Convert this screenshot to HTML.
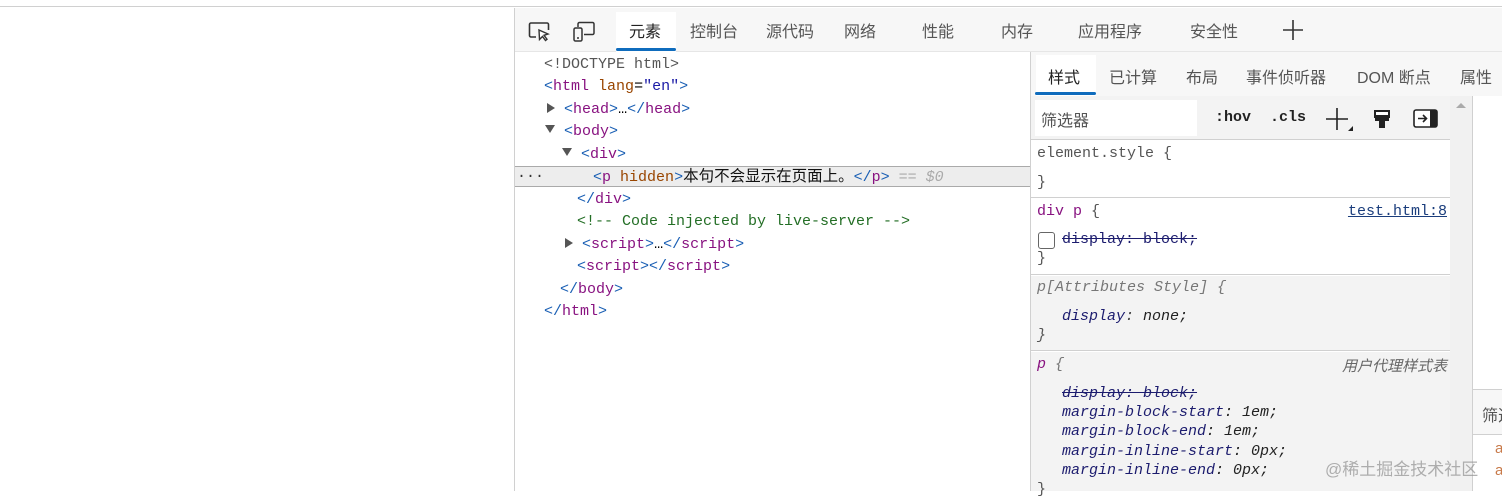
<!DOCTYPE html>
<html><head><meta charset="utf-8"><style>
*{margin:0;padding:0;box-sizing:border-box}
body{width:1502px;height:491px;overflow:hidden;background:#fff;position:relative;font-family:"Liberation Sans","Noto Sans CJK SC",sans-serif}
.abs{position:absolute;white-space:nowrap}
.mono{font-family:"Liberation Mono","Noto Sans CJK SC",monospace;font-size:15px;white-space:pre}
.tag{color:#881280}.br{color:#1a5fb4}.at{color:#994500}.av{color:#1a1aa6}
.tab{position:absolute;top:18px;font-size:16px;color:#555;white-space:nowrap}
.line{position:absolute;height:22px;line-height:22px}
.tri{display:inline-block;width:0;height:0}
.tr{border-top:5px solid transparent;border-bottom:5px solid transparent;border-left:8px solid #555}
.td{border-left:5px solid transparent;border-right:5px solid transparent;border-top:8px solid #555}
.prop{color:#1c1c6e}
</style></head><body>
<div class="abs" style="left:0;top:0;width:1502px;height:7px;background:#fff;border-bottom:1px solid #d0d0d0"></div>
<div class="abs" style="left:514px;top:8px;width:1px;height:483px;background:#d0d0d0"></div>
<!-- toolbar -->
<div class="abs" style="left:515px;top:8px;width:987px;height:44px;background:#f7f7f7;border-bottom:1px solid #e6e6e6"></div>
<svg class="abs" style="left:528px;top:21px" width="24" height="22" viewBox="0 0 24 22"><path d="M8 16H3a1.5 1.5 0 0 1-1.5-1.5v-11A1.5 1.5 0 0 1 3 2h16a1.5 1.5 0 0 1 1.5 1.5V9" fill="none" stroke="#333" stroke-width="1.6"/><path d="M11 9l9 4-4 1.3 3 4-1.5 1.2-3-4-3 3z" fill="#fff" stroke="#333" stroke-width="1.4"/></svg>
<svg class="abs" style="left:572px;top:21px" width="24" height="22" viewBox="0 0 24 22"><rect x="2" y="7" width="8" height="13" rx="1.5" fill="none" stroke="#333" stroke-width="1.5"/><path d="M6 6V3a1.5 1.5 0 0 1 1.5-1.5h13A1.5 1.5 0 0 1 22 3v9a1.5 1.5 0 0 1-1.5 1.5H12" fill="none" stroke="#333" stroke-width="1.5"/><line x1="5" y1="17" x2="7" y2="17" stroke="#333" stroke-width="1.5"/></svg>
<div class="abs" style="left:616px;top:12px;width:60px;height:40px;background:#fff"></div>
<div class="abs" style="left:616px;top:48px;width:60px;height:3px;background:#0f6cbd;border-radius:2px"></div>
<div class="tab" style="left:629px;color:#222">元素</div>
<div class="tab" style="left:690px">控制台</div>
<div class="tab" style="left:766px">源代码</div>
<div class="tab" style="left:844px">网络</div>
<div class="tab" style="left:922px">性能</div>
<div class="tab" style="left:1001px">内存</div>
<div class="tab" style="left:1078px">应用程序</div>
<div class="tab" style="left:1190px">安全性</div>
<svg class="abs" style="left:1282px;top:19px" width="22" height="22"><path d="M11 1v20M1 11h20" stroke="#333" stroke-width="1.6"/></svg>
<!-- DOM tree -->
<div class="abs" style="left:515px;top:166px;width:515px;height:21px;background:#ededed;border-top:1px solid #aaa;border-bottom:1px solid #aaa"></div>
<div class="mono abs" style="left:515px;top:53px;line-height:22.4px">
<div class="line" style="top:1px;left:29px;color:#555">&lt;!DOCTYPE html&gt;</div>
<div class="line" style="top:23px;left:29px"><span class="br">&lt;</span><span class="tag">html</span> <span class="at">lang</span>=<span class="av">"en"</span><span class="br">&gt;</span></div>
<div class="line" style="top:46px;left:32px"><span class="tri tr"></span> <span class="br">&lt;</span><span class="tag">head</span><span class="br">&gt;</span>…<span class="br">&lt;/</span><span class="tag">head</span><span class="br">&gt;</span></div>
<div class="line" style="top:68px;left:30px"><span class="tri td" style="vertical-align:2px"></span> <span class="br">&lt;</span><span class="tag">body</span><span class="br">&gt;</span></div>
<div class="line" style="top:91px;left:47px"><span class="tri td" style="vertical-align:2px"></span> <span class="br">&lt;</span><span class="tag">div</span><span class="br">&gt;</span></div>
<div class="line" style="top:113px;left:2px;color:#333">···</div>
<div class="line" style="top:113px;left:78px"><span class="br">&lt;</span><span class="tag">p</span> <span class="at">hidden</span><span class="br">&gt;</span><span style="color:#111;font-size:15.5px">本句不会显示在页面上。</span><span class="br">&lt;/</span><span class="tag">p</span><span class="br">&gt;</span> <span style="color:#aaa;font-style:italic">== $0</span></div>
<div class="line" style="top:136px;left:62px"><span class="br">&lt;/</span><span class="tag">div</span><span class="br">&gt;</span></div>
<div class="line" style="top:158px;left:62px;color:#236e25">&lt;!-- Code injected by live-server --&gt;</div>
<div class="line" style="top:181px;left:50px"><span class="tri tr"></span> <span class="br">&lt;</span><span class="tag">script</span><span class="br">&gt;</span>…<span class="br">&lt;/</span><span class="tag">script</span><span class="br">&gt;</span></div>
<div class="line" style="top:203px;left:62px"><span class="br">&lt;</span><span class="tag">script</span><span class="br">&gt;&lt;/</span><span class="tag">script</span><span class="br">&gt;</span></div>
<div class="line" style="top:226px;left:45px"><span class="br">&lt;/</span><span class="tag">body</span><span class="br">&gt;</span></div>
<div class="line" style="top:248px;left:29px"><span class="br">&lt;/</span><span class="tag">html</span><span class="br">&gt;</span></div>
</div>
<!-- styles panel -->
<div class="abs" style="left:1030px;top:52px;width:1px;height:439px;background:#d0d0d0"></div>
<div class="abs" style="left:1031px;top:52px;width:471px;height:44px;background:#f7f7f7"></div>
<div class="abs" style="left:1036px;top:55px;width:60px;height:41px;background:#fff"></div>
<div class="abs" style="left:1035px;top:92px;width:61px;height:3px;background:#0f6cbd;border-radius:2px"></div>
<div class="tab" style="top:64px;left:1048px;color:#222">样式</div>
<div class="tab" style="top:64px;left:1109px">已计算</div>
<div class="tab" style="top:64px;left:1186px">布局</div>
<div class="tab" style="top:64px;left:1246px">事件侦听器</div>
<div class="tab" style="top:64px;left:1357px">DOM 断点</div>
<div class="tab" style="top:64px;left:1460px">属性</div>
<div class="abs" style="left:1031px;top:96px;width:419px;height:44px;background:#f3f3f3;border-bottom:1px solid #d0d0d0"></div>
<div class="abs" style="left:1035px;top:100px;width:162px;height:36px;background:#fff"></div>
<div class="abs" style="left:1041px;top:107px;font-size:16px;color:#555">筛选器</div>
<div class="abs" style="left:1215px;top:109px;font-size:15px;font-weight:bold;color:#222;font-family:'Liberation Mono',monospace">:hov</div>
<div class="abs" style="left:1270px;top:109px;font-size:15px;font-weight:bold;color:#222;font-family:'Liberation Mono',monospace">.cls</div>
<svg class="abs" style="left:1325px;top:107px" width="30" height="28"><path d="M12 1v22M1 12h22" stroke="#222" stroke-width="1.6"/><path d="M28 24v-5l-5 5z" fill="#222"/></svg>
<svg class="abs" style="left:1372px;top:108px" width="20" height="22"><path d="M2 2h16v8H2z" fill="#222"/><path d="M4 4h12v3H4z" fill="#fff"/><path d="M3 10h14v3H3z" fill="#222"/><rect x="7" y="13" width="6" height="7" fill="#222"/></svg>
<svg class="abs" style="left:1413px;top:109px" width="26" height="20"><rect x="1" y="1" width="23" height="17" rx="2" fill="#fff" stroke="#222" stroke-width="1.6"/><rect x="17" y="1" width="7" height="17" fill="#222"/><path d="M5 9.5h8M10 6l3.5 3.5L10 13" stroke="#222" stroke-width="1.6" fill="none"/></svg>
<!-- rules -->
<div class="mono abs" style="left:1031px;top:141px;width:419px;height:350px">
<div class="abs" style="left:0;top:0;width:419px;height:57px;background:#fff;border-bottom:1px solid #d0d0d0"></div>
<div class="abs" style="left:6px;top:4px;color:#555">element.style {</div>
<div class="abs" style="left:6px;top:33px;color:#555">}</div>
<div class="abs" style="left:0;top:58px;width:419px;height:76px;background:#fff;border-bottom:1px solid #d0d0d0"></div>
<div class="abs" style="left:6px;top:62px;color:#555"><span class="tag">div p</span> {</div>
<div class="abs" style="right:3px;top:62px;color:#1a3d7c;text-decoration:underline">test.html:8</div>
<div class="abs" style="left:7px;top:91px;width:17px;height:17px;border:1.5px solid #666;border-radius:3px;background:#fff"></div>
<div class="abs prop" style="left:31px;top:90px;text-decoration:line-through">display: block;</div>
<div class="abs" style="left:6px;top:109px;color:#555">}</div>
<div class="abs" style="left:0;top:135px;width:419px;height:75px;background:#f3f3f3;border-bottom:1px solid #d0d0d0"></div>
<div class="abs" style="left:6px;top:138px;color:#777;font-style:italic">p[Attributes Style] {</div>
<div class="abs prop" style="left:31px;top:167px;font-style:italic">display<span style="color:#444">:</span> <span style="color:#222">none;</span></div>
<div class="abs" style="left:6px;top:186px;color:#555;font-style:italic">}</div>
<div class="abs" style="left:0;top:211px;width:419px;height:139px;background:#f3f3f3"></div>
<div class="abs" style="left:6px;top:215px;font-style:italic;color:#777"><span class="tag">p</span> {</div>
<div class="abs" style="right:3px;top:214px;font-style:italic;color:#666;font-family:'Liberation Sans','Noto Sans CJK SC',sans-serif;font-size:15px">用户代理样式表</div>
<div class="abs prop" style="left:31px;top:244px;font-style:italic;text-decoration:line-through">display: block;</div>
<div class="abs prop" style="left:31px;top:263px;font-style:italic">margin-block-start<span style="color:#222">: 1em;</span></div>
<div class="abs prop" style="left:31px;top:282px;font-style:italic">margin-block-end<span style="color:#222">: 1em;</span></div>
<div class="abs prop" style="left:31px;top:302px;font-style:italic">margin-inline-start<span style="color:#222">: 0px;</span></div>
<div class="abs prop" style="left:31px;top:321px;font-style:italic">margin-inline-end<span style="color:#222">: 0px;</span></div>
<div class="abs" style="left:6px;top:340px;color:#555">}</div>
</div>
<!-- scrollbar -->
<div class="abs" style="left:1450px;top:96px;width:22px;height:395px;background:#f1f1f1"></div>
<div class="abs" style="left:1456px;top:103px;width:0;height:0;border-left:5px solid transparent;border-right:5px solid transparent;border-bottom:5px solid #aaa"></div>
<div class="abs" style="left:1472px;top:96px;width:1px;height:395px;background:#d0d0d0"></div>
<div class="abs" style="left:1473px;top:389px;width:29px;height:46px;background:#f7f7f7;border-top:1px solid #d0d0d0;border-bottom:1px solid #d0d0d0;overflow:hidden"><div style="position:absolute;left:9px;top:12px;font-size:16px;color:#555;white-space:nowrap">筛选</div></div>
<div class="abs" style="left:1495px;top:438px;font-size:15px;color:#c87a4a;line-height:22px">a<br>a</div>
<div class="abs" style="left:1325px;top:455px;font-size:17px;color:rgba(150,150,150,.75)">@稀土掘金技术社区</div>
</body></html>
